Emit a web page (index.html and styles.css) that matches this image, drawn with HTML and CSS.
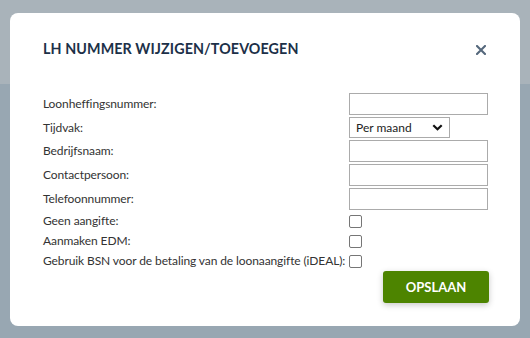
FILE: index.html
```html
<!DOCTYPE html>
<html lang="nl">
<head>
<meta charset="utf-8">
<title>LH nummer wijzigen/toevoegen</title>
<link rel="stylesheet" href="styles.css">
</head>
<body>
<div class="modal">
  <div class="modal-header">
    <h2 class="modal-title">LH NUMMER WIJZIGEN/TOEVOEGEN</h2>
    <button class="close" aria-label="Sluiten">
      <svg width="10" height="10" viewBox="0 0 10 10"><path d="M1 1 L9 9 M9 1 L1 9" stroke="#55687c" stroke-width="2.1" stroke-linecap="square"/></svg>
    </button>
  </div>
  <form class="form">
    <label class="lbl">Loonheffingsnummer:</label>
    <input class="txt" type="text">
    <label class="lbl">Tijdvak:</label>
    <div class="select">
      <span>Per maand</span>
      <svg width="11" height="7" viewBox="0 0 11 7"><path d="M1.3 1.3 L5.5 5.3 L9.7 1.3" fill="none" stroke="#111" stroke-width="2.2"/></svg>
    </div>
    <label class="lbl">Bedrijfsnaam:</label>
    <input class="txt" type="text">
    <label class="lbl">Contactpersoon:</label>
    <input class="txt" type="text">
    <label class="lbl">Telefoonnummer:</label>
    <input class="txt" type="text">
    <label class="lbl cbrow">Geen aangifte:</label>
    <div class="cbcell"><span class="cb"></span></div>
    <label class="lbl cbrow">Aanmaken EDM:</label>
    <div class="cbcell"><span class="cb"></span></div>
    <label class="lbl cbrow">Gebruik BSN voor de betaling van de loonaangifte (iDEAL):</label>
    <div class="cbcell"><span class="cb"></span></div>
    <div class="actions">
      <button type="button" class="btn">OPSLAAN</button>
    </div>
  </form>
</div>
</body>
</html>
```

FILE: styles.css
```css
html, body {
  margin: 0;
  padding: 0;
}
body {
  width: 530px;
  height: 338px;
  overflow: hidden;
  background: linear-gradient(to bottom, #a9b3ba 0, #a9b3ba 84px, #98a7b2 84px, #98a7b2 100%);
  font-family: Lato, "Noto Sans", sans-serif;
  padding-top: 13px;
  box-sizing: border-box;
}
.modal {
  margin-left: 10px;
  width: 510px;
  height: 313px;
  background: #fff;
  border-radius: 8px;
  padding: 23px 34px 0 33px;
  box-sizing: border-box;
}
.modal-header {
  display: flex;
  justify-content: space-between;
  align-items: center;
  height: 26px;
}
.modal-title {
  margin: 0;
  font-size: 14.3px;
  line-height: 26px;
  font-weight: 700;
  color: #1c3048;
  letter-spacing: 0.1px;
}
.close {
  border: 0;
  background: none;
  padding: 0;
  width: 10px;
  height: 10px;
  display: flex;
  margin-top: 2px;
}
.form {
  margin-top: 31px;
  display: grid;
  grid-template-columns: 306px 139px;
  row-gap: 2px;
  align-items: center;
}
.lbl {
  font-size: 12px;
  letter-spacing: -0.1px;
  color: #333;
  white-space: nowrap;
  line-height: 16px;
}
.txt {
  box-sizing: border-box;
  width: 139px;
  height: 22px;
  margin: 0;
  border: 1px solid #ababab;
  border-radius: 0;
  outline: none;
  padding: 0 4px;
}
.select {
  box-sizing: border-box;
  width: 101px;
  height: 21px;
  border: 1px solid #ababab;
  display: flex;
  align-items: center;
  justify-content: space-between;
  padding: 0 6px 0 6px;
  font-size: 12px;
  color: #222;
}
.cbrow {
  height: 18px;
  line-height: 18px;
}
.cbcell {
  height: 18px;
  display: flex;
  align-items: center;
}
.cb {
  box-sizing: border-box;
  width: 13px;
  height: 13px;
  border: 1px solid #767676;
  border-radius: 2px;
  background: #fff;
}
.actions {
  grid-column: 2;
  display: flex;
  justify-content: flex-end;
  margin-right: -1px;
  margin-top: -1px;
}
.btn {
  width: 106px;
  height: 32px;
  border: 0;
  border-radius: 3px;
  background: #4d8400;
  color: #fff;
  font-family: Lato, "Noto Sans", sans-serif;
  font-weight: 700;
  font-size: 13px;
  box-shadow: 0 2px 6px rgba(0, 0, 0, 0.22);
}
```
